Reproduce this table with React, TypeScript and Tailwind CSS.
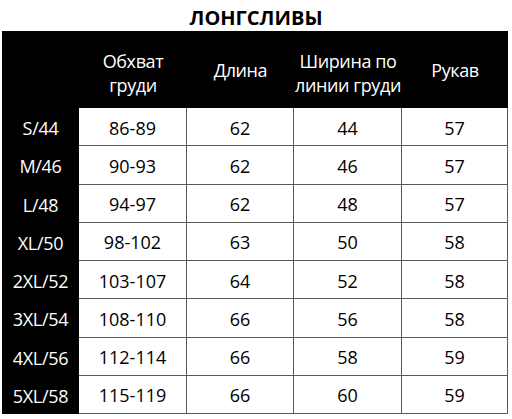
const headers = [
  ["Обхват", "груди"],
  ["Длина"],
  ["Ширина по", "линии груди"],
  ["Рукав"],
];

const rows = [
  ["S/44", "86-89", "62", "44", "57"],
  ["M/46", "90-93", "62", "46", "57"],
  ["L/48", "94-97", "62", "48", "57"],
  ["XL/50", "98-102", "63", "50", "58"],
  ["2XL/52", "103-107", "64", "52", "58"],
  ["3XL/54", "108-110", "66", "56", "58"],
  ["4XL/56", "112-114", "66", "58", "59"],
  ["5XL/58", "115-119", "66", "60", "59"],
];

export default function App() {
  return (
    <div className="w-[512px] h-[419px] bg-white font-['Open_Sans',sans-serif] text-[18px]">
      <div className="h-[31px] text-center text-[20px] font-bold leading-[35px] text-black">
        ЛОНГСЛИВЫ
      </div>
      <div className="ml-[2px] grid w-[506px] grid-cols-[77px_108px_107px_108px_106px] grid-rows-[77px_repeat(8,38.25px)]">
        <div className="bg-black" />
        {headers.map((lines, i) => (
          <div
            key={i}
            className={`flex flex-col items-center justify-center bg-black text-center leading-[24px] text-white ${lines.length > 1 ? "pt-[7px]" : "pt-[1px]"}`}
          >
            {lines.map((l) => (
              <span key={l} className="whitespace-nowrap tracking-[-0.4px]">
                {l}
              </span>
            ))}
          </div>
        ))}
        {rows.map((row) =>
          row.map((cell, j) =>
            j === 0 ? (
              <div
                key={row[0] + j}
                className="flex items-center justify-center bg-black pt-[3px] tracking-[-0.3px] text-white"
              >
                {cell}
              </div>
            ) : (
              <div
                key={row[0] + j}
                className="flex items-center justify-center border-b border-r border-[#5a5a5a] pt-[3px] text-black"
              >
                {cell}
              </div>
            ),
          ),
        )}
      </div>
    </div>
  );
}
